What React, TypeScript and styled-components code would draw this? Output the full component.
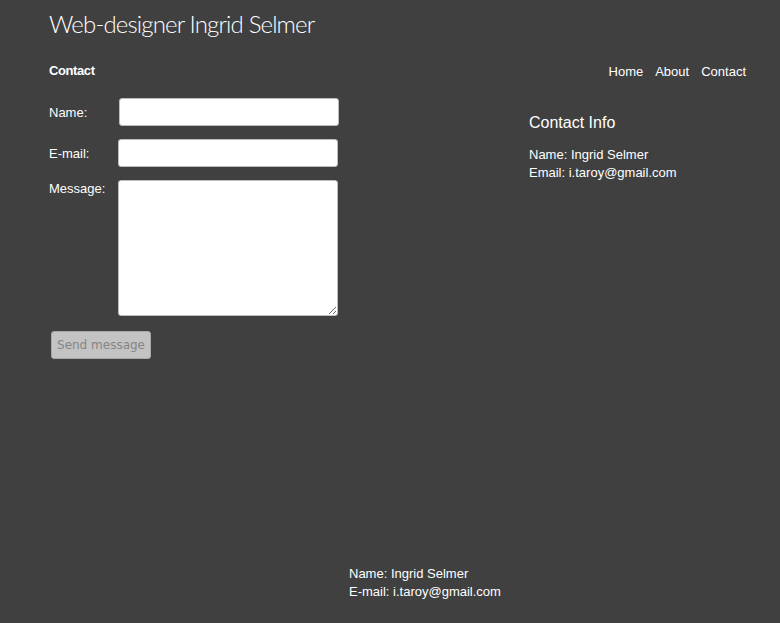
import React from "react";
import styled, { createGlobalStyle } from "styled-components";

const Global = createGlobalStyle`
  html, body { margin: 0; padding: 0; background: #404040; }
  body { font-family: "Liberation Sans", Arial, sans-serif; color: #fff; }
  * { box-sizing: border-box; }
`;

const Page = styled.div`
  min-height: 100vh;
  display: flex;
  flex-direction: column;
  padding: 9px 34px 20px 49px;
`;

const Title = styled.h1`
  margin: 0;
  font-family: "Lato", "Liberation Sans", sans-serif;
  font-weight: 300;
  font-size: 24px;
  line-height: 30px;
  letter-spacing: -0.85px;
`;

const TopBar = styled.div`
  display: flex;
  justify-content: space-between;
  align-items: flex-start;
  margin-top: 23px;
`;

const SectionLabel = styled.div`
  font-size: 13px;
  font-weight: bold;
  line-height: 18px;
  letter-spacing: -0.4px;
`;

const Nav = styled.nav`
  display: flex;
  gap: 12px;
  margin-top: 1px;
`;

const NavLink = styled.a`
  color: #fff;
  text-decoration: none;
  font-size: 13px;
  line-height: 18px;
`;

const Main = styled.div`
  display: flex;
  margin-top: 17px;
`;

const Form = styled.form`
  width: 480px;
  display: flex;
  flex-direction: column;
`;

const Row = styled.div`
  display: flex;
  align-items: flex-start;
  margin-bottom: 13px;
`;

const Label = styled.label<{ $top: number }>`
  width: 69px;
  font-size: 13px;
  line-height: 18px;
  padding-top: ${(p) => p.$top}px;
`;

const TextInput = styled.input<{ $shift?: number }>`
  width: 220px;
  height: 28px;
  margin-left: ${(p) => p.$shift ?? 0}px;
  border: 1px solid #bdbdbd;
  border-radius: 3px;
  background: #fff;
  outline: none;
`;

const TextArea = styled.textarea`
  width: 220px;
  height: 136px;
  border: 1px solid #bdbdbd;
  border-radius: 3px;
  background: #fff;
  outline: none;
  resize: both;
`;

const Button = styled.button`
  width: 100px;
  height: 28px;
  margin: 2px 0 0 2px;
  background: #c3c3c3;
  border: 1px solid #a8a8a8;
  border-radius: 3px;
  color: #858585;
  font-family: "DejaVu Sans", sans-serif;
  font-size: 12px;
  padding: 0;
`;

const Info = styled.div`
  padding-top: 15px;
`;

const InfoTitle = styled.h2`
  margin: 0 0 13px 0;
  font-size: 16px;
  font-weight: normal;
  line-height: 20px;
`;

const Line = styled.div`
  font-size: 13px;
  line-height: 18px;
`;

const Footer = styled.footer`
  margin-top: auto;
  padding-left: 300px;
  padding-bottom: 2px;
`;

export default function App() {
  return (
    <>
      <Global />
      <Page>
        <Title>Web-designer Ingrid Selmer</Title>
        <TopBar>
          <SectionLabel>Contact</SectionLabel>
          <Nav>
            <NavLink href="#">Home</NavLink>
            <NavLink href="#">About</NavLink>
            <NavLink href="#">Contact</NavLink>
          </Nav>
        </TopBar>
        <Main>
          <Form onSubmit={(e) => e.preventDefault()}>
            <Row>
              <Label $top={6}>Name:</Label>
              <TextInput type="text" $shift={1} />
            </Row>
            <Row>
              <Label $top={6}>E-mail:</Label>
              <TextInput type="email" />
            </Row>
            <Row>
              <Label $top={0}>Message:</Label>
              <TextArea />
            </Row>
            <div>
              <Button type="submit" disabled>Send message</Button>
            </div>
          </Form>
          <Info>
            <InfoTitle>Contact Info</InfoTitle>
            <Line>Name: Ingrid Selmer</Line>
            <Line>Email: i.taroy@gmail.com</Line>
          </Info>
        </Main>
        <Footer>
          <Line>Name: Ingrid Selmer</Line>
          <Line>E-mail: i.taroy@gmail.com</Line>
        </Footer>
      </Page>
    </>
  );
}
